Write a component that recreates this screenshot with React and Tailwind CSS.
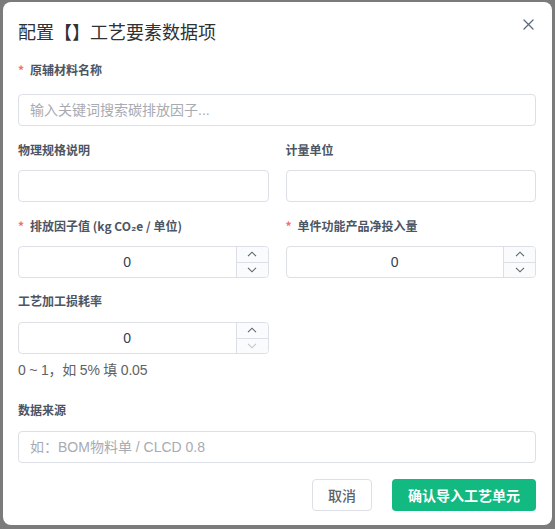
import React from 'react'

const CJK = { fontFamily: '"Liberation Sans", "Noto Sans CJK SC", sans-serif' }
const LABEL = { fontFamily: '"Noto Sans CJK SC", sans-serif' }

function Label({ required, children, className = '' }) {
  return (
    <div className={`h-4 flex items-center text-[12px] font-bold text-[#4b5563] leading-4 ${className}`} style={LABEL}>
      {required && <span className="text-[#f56c6c] mr-[6px] text-[12px]">*</span>}
      {children}
    </div>
  )
}

function TextInput({ placeholder = '', className = '' }) {
  return (
    <div className={`h-8 rounded-[4px] border border-[#dcdfe6] bg-white flex items-center px-[11px] ${className}`}>
      <span className="text-[14px] text-[#a8abb2] whitespace-nowrap">{placeholder}</span>
    </div>
  )
}

function Chevron({ up, muted }) {
  return (
    <svg width="10" height="6" viewBox="0 0 10 6" fill="none" stroke={muted ? '#c0c4cc' : '#606266'} strokeWidth="1.1">
      {up ? <path d="M1 5.2 L5 1.2 L9 5.2" /> : <path d="M1 0.8 L5 4.8 L9 0.8" />}
    </svg>
  )
}

function NumberInput({ downMuted, className = '' }) {
  return (
    <div className={`h-8 rounded-[4px] border border-[#dcdfe6] bg-white flex overflow-hidden ${className}`}>
      <div className="flex-1 flex items-center justify-center text-[14px] text-[#374151]">0</div>
      <div className="w-8 border-l border-[#dcdfe6] bg-[#fafbfc] flex flex-col">
        <div className="flex-1 flex items-center justify-center border-b border-[#dcdfe6]"><Chevron up /></div>
        <div className="flex-1 flex items-center justify-center"><Chevron muted={downMuted} /></div>
      </div>
    </div>
  )
}

export default function App() {
  return (
    <div className="w-[555px] h-[529px] bg-[#7b7b7b] pt-[2px] pl-[3px] overflow-hidden" style={CJK}>
      <div className="relative w-[549px] h-[523px] bg-white rounded-lg pl-[15px] pr-[16px] pt-[17px]">
        <div className="h-6 flex items-center text-[18px] text-[#303133] leading-6" style={LABEL}>
          配置【】工艺要素数据项
        </div>
        <button className="absolute top-[15px] right-[17px] w-[14px] h-[14px] flex items-center justify-center">
          <svg width="11" height="11" viewBox="0 0 11 11" stroke="#5b6b80" strokeWidth="1.3" strokeLinecap="round">
            <path d="M1 1 L10 10 M10 1 L1 10" />
          </svg>
        </button>

        <Label required className="mt-[19px]">原辅材料名称</Label>
        <TextInput className="mt-[16px]" placeholder="输入关键词搜索碳排放因子..." />

        <div className="grid grid-cols-2 gap-x-[17px] mt-[16px]">
          <div>
            <Label>物理规格说明</Label>
            <TextInput className="mt-[12px]" />
          </div>
          <div>
            <Label>计量单位</Label>
            <TextInput className="mt-[12px]" />
          </div>
        </div>

        <div className="grid grid-cols-2 gap-x-[17px] mt-[16px]">
          <div>
            <Label required>排放因子值 (kg CO₂e / 单位)</Label>
            <NumberInput className="mt-[12px]" />
          </div>
          <div>
            <Label required>单件功能产品净投入量</Label>
            <NumberInput className="mt-[12px]" />
          </div>
        </div>

        <div className="grid grid-cols-2 gap-x-[17px] mt-[15px]">
          <div>
            <Label>工艺加工损耗率</Label>
            <NumberInput className="mt-[13px]" downMuted />
            <div className="mt-[6px] text-[14px] leading-5 text-[#606266] tracking-[-0.2px]">0 ~ 1，如 5% 填 0.05</div>
          </div>
        </div>

        <Label className="mt-[22px]">数据来源</Label>
        <TextInput className="mt-[13px]" placeholder="如：BOM物料单 / CLCD 0.8" />

        <div className="mt-[16px] flex justify-end gap-[20px]">
          <button className="w-[60px] h-8 rounded-[4px] border border-[#dcdfe6] bg-white text-[14px] font-medium text-[#606266]" style={LABEL}>
            取消
          </button>
          <button className="w-[144px] h-8 rounded-[4px] bg-[#12b981] text-[14px] font-bold text-white" style={LABEL}>
            确认导入工艺单元
          </button>
        </div>
      </div>
    </div>
  )
}
